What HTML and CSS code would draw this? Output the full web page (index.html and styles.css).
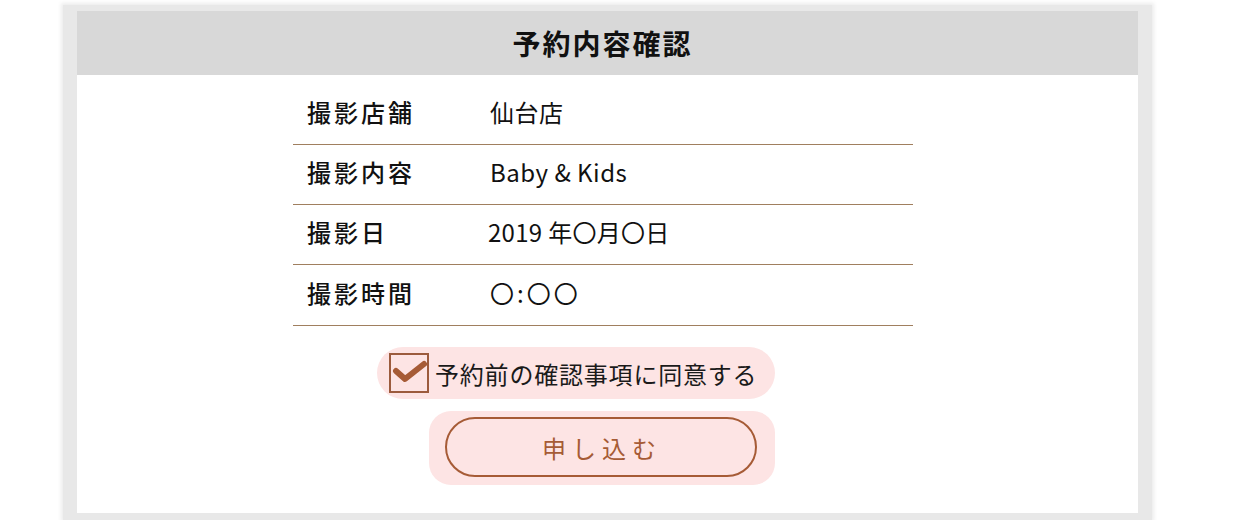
FILE: index.html
```html
<!DOCTYPE html>
<html lang="ja">
<head>
  <meta charset="UTF-8" />
  <title>予約内容確認</title>
  <link rel="stylesheet" href="styles.css">
</head>
<body>
  <div class="frame">
    <div class="panel">
      <h1 class="title">予約内容確認</h1>
      <div class="content">
        <dl class="detail">
          <div class="row"><dt>撮影店舗</dt><dd>仙台店</dd></div>
          <div class="row"><dt>撮影内容</dt><dd>Baby &amp; Kids</dd></div>
          <div class="row"><dt>撮影日</dt><dd class="date">2019 年〇月〇日</dd></div>
          <div class="row"><dt>撮影時間</dt><dd class="time">〇:〇〇</dd></div>
        </dl>

        <label class="agree">
          <span class="checkbox">
            <svg width="36" height="36" viewBox="0 0 36 36">
              <path d="M5 16 L14 24 L33 9" fill="none" stroke="#a65b36" stroke-width="6" stroke-linecap="round" stroke-linejoin="round"/>
            </svg>
          </span>
          <span class="agree-text">予約前の確認事項に同意する</span>
        </label>

        <div class="submit-wrap">
          <button class="btn-submit">申し込む</button>
        </div>
      </div>
    </div>
  </div>
</body>
</html>
```

FILE: styles.css
```css
body {
  margin: 0;
  background: #fff;
  font-family: "Noto Sans CJK JP", "Noto Sans", sans-serif;
  color: #111;
}
.frame {
  width: 1061px;
  margin: 5px 0 0 63px;
  padding: 6px 14px 7px;
  background: #e8e8e8;
  box-shadow: 0 0 4px 2px #ececec;
}
.panel {
  background: #fff;
  height: 502px;
}
.title {
  margin: 0;
  height: 64px;
  line-height: 64px;
  background: #d8d8d8;
  text-align: center;
  font-size: 28px;
  font-weight: bold;
  letter-spacing: 2px;
  padding-left: 2px;
  padding-right: 12px;
}
.content {
  width: 620px;
  margin-left: 216px;
  padding-top: 10px;
}
.detail {
  margin: 0;
}
.row {
  display: grid;
  grid-template-columns: 183px 1fr;
  align-items: center;
  height: 53px;
  padding: 0 0 6px 14px;
  border-bottom: 1px solid #a07f5f;
}
.row:last-child {
  height: 54px;
}
.row dt {
  font-size: 24px;
  font-weight: 500;
  letter-spacing: 3px;
}
.row dd {
  margin: 0;
  font-size: 24px;
  letter-spacing: 0.5px;
}
.row dd.date {
  margin-left: -2px;
  letter-spacing: 0.3px;
}
.row dd.time {
  letter-spacing: 3px;
}
.agree {
  display: flex;
  align-items: center;
  width: 398px;
  height: 52px;
  box-sizing: border-box;
  margin: 21px 0 0 84px;
  padding-left: 12px;
  background: #fde4e4;
  border-radius: 26px;
  cursor: pointer;
}
.checkbox {
  width: 36px;
  height: 36px;
  border: 2px solid #9c5b3d;
  display: flex;
}
.agree-text {
  margin-left: 6px;
  font-size: 24px;
  letter-spacing: 0.8px;
  color: #1a1a1a;
}
.submit-wrap {
  width: 346px;
  box-sizing: border-box;
  margin: 12px 0 0 136px;
  padding: 6px 18px 8px 16px;
  background: #fde4e4;
  border-radius: 22px;
}
.btn-submit {
  display: block;
  width: 312px;
  height: 60px;
  border: 2px solid #a65b36;
  border-radius: 30px;
  background: #fde4e4;
  color: #a65b36;
  font-family: inherit;
  font-size: 24px;
  letter-spacing: 6px;
  padding-left: 8px;
  cursor: pointer;
}
```
